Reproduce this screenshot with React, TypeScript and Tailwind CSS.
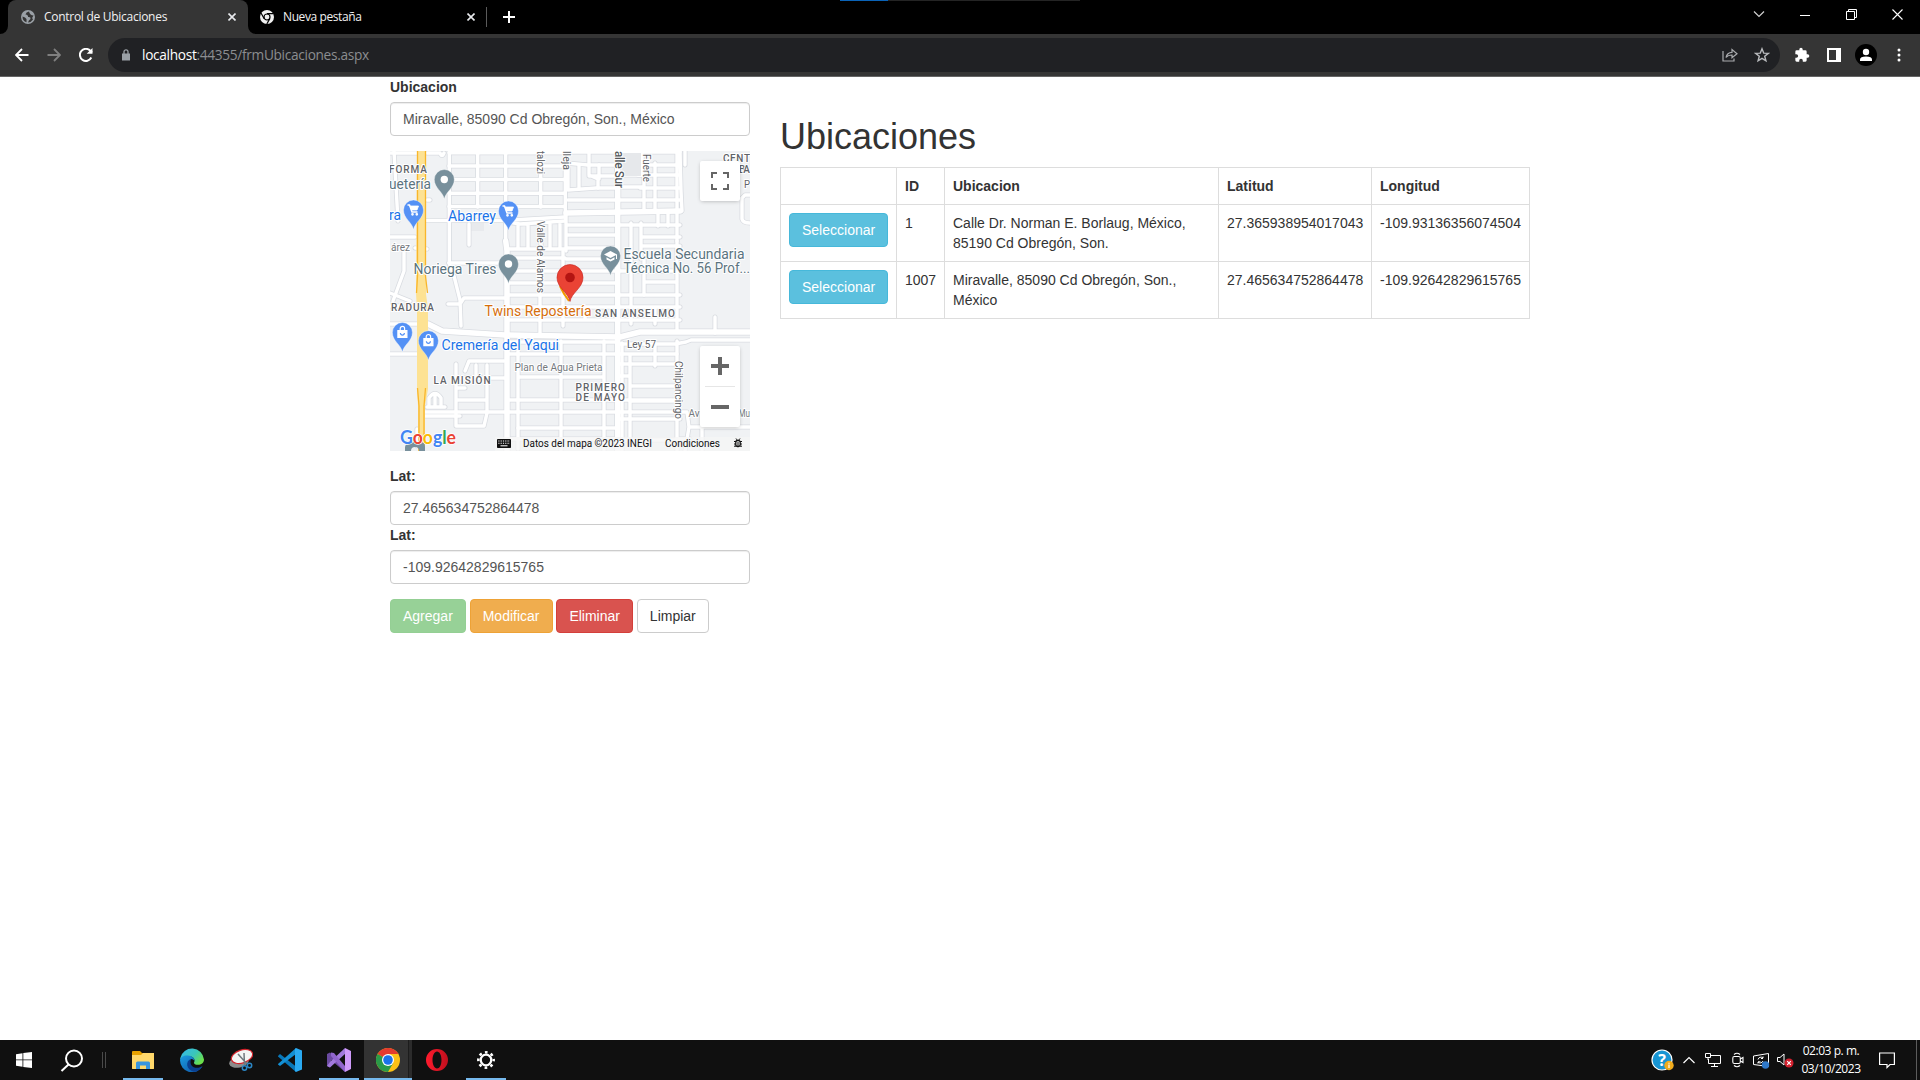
import React from "react";

/* ---------- Map ---------- */

const WIDE_ROADS = [
  "M115.7 90L117 100V300",
  "M227.700 0V300",
  "M38 173L52 180L115 184L230 186L250 181L360 181",
  "M176 62L290 60",
];

const ROADS = [
  "M0 2H27M37 2H50Q52 7 54 2",
  "M115.700 0V95M59.3 0V112M87.7 0V56M150.7 0V56M175.3 0V67",
  "M59 1.7H175M59 15H175M59 28.5H175M59 42.3H175M59 55.5H175",
  "M36 69.5H115L175 66",
  "M176 1H290M176 12L198 14H290M248 24H290M250 37H290M178 39L206 37H226M178 49H290",
  "M199 0V24L208 28V37M189 14V38M178 17V38M209 14V28M199 25L226 25",
  "M230 24H252V2M254 24V60M233 36L254 36M265 12V60M287 0V90M290 0L291 40L292 60",
  "M176 74H290M176 84H228M176 97H228M176 108H228M176 61V100",
  "M241 72V108M251 72V108M268 60V75M278 60V75M252 86H290M252 95H290",
  "M117 71L130 73L175 70M128 75V97M138 74V96M151 73V97M160 73V97M170 73V97M117 98H175M117 107H175",
  "M59 112H117M37 98L25 97M37 49L40 49M79 73V94",
  "M0 86H25M8 70L4 0M14 100V120L3 150M0 142L20 150",
  "M59 112L64 125L70 149L71 175M58 153H70L74 147H115",
  "M117 120H228M117 132H228M117 144H290M117 156H290M117 169H290M173 100V175M150 110V183M195 157V169",
  "M241 108V173M254 108V144M228 120H290M255 131H287M287 90V181M265 157V173",
  "M325 182V166",
  "M228 193H285L296 191L301 189H360M287 190V300",
  "M118 203H228M117 191H228M128 194V298M171 190V300M214 190V300M232 192V300M240 205V290M128 226H214M228 203H287M228 213H287M240 235H287M228 225H240",
  "M117 249H290M117 288H228M240 250H290M128 277H227M228 268H290M232 289H290M265 192V215",
  "M33 261H297L299 276H360M299 276L295 300M287 288H300M312 276V300",
  "M33 265H70M66 213V275H94L97 262V214M66 227H115M66 249H97M66 237H75M75 220L79 210H114M86 214V227",
  "M37 256H55M39 256V247Q45 238 51 247V256M45 243V256M0 173H27M0 203H27",
  "M352 47L355 44H360M352 47V68Q353 72 360 72",
  "M27 278V295M0 155H12M295 0V14",
];

const MINOR_TEXT = "#5f6368";

function Pin({ x, y, color, children }: { x: number; y: number; color: string; children?: React.ReactNode }) {
  return (
    <g transform={`translate(${x} ${y})`}>
      <path d="M0 19.5C-1.5 12-10 8.500-10 0A10 10 0 0 1 10 0C10 8.500 1.500 12 0 19.500Z" fill={color} stroke="#fff" strokeOpacity=".6" strokeWidth=".6" />
      {children}
    </g>
  );
}

const Cart = () => (
  <g fill="none" stroke="#fff" strokeWidth="1.500">
    <path d="M-6-5H-4L-1.500 2H4" />
    <path d="M-3.500-4H5L3.500 0H-2Z" fill="#fff" strokeWidth=".8" />
    <circle cx="-1" cy="4.300" r=".6" />
    <circle cx="3.300" cy="4.300" r=".6" />
  </g>
);

const Bag = () => (
  <g fill="none" stroke="#fff" strokeWidth="1.200">
    <path d="M-4.500-2H4.500V5H-4.500Z" fill="#fff" />
    <path d="M-2.200-2V-4A2.200 2.200 0 0 1 2.200-4V-2" />
    <path d="M-2 .6A2 2 0 0 0 2 .6" stroke="#5491f5" />
  </g>
);

type LabelProps = {
  x: number;
  y: number;
  w: number;
  size: number;
  text: string;
  color?: string;
  bold?: boolean;
  down?: boolean;
};

function MapLabel({ x, y, w, size, text, color = MINOR_TEXT, bold, down }: LabelProps) {
  return (
    <text
      transform={down ? `translate(${x} ${y}) rotate(90)` : `translate(${x} ${y})`}
      textLength={w}
      lengthAdjust={bold ? "spacing" : "spacingAndGlyphs"}
      fontSize={size}
      fill={color}
      fontWeight={bold ? 500 : 400}
      stroke="#fff"
      strokeWidth="2"
      strokeLinejoin="round"
      paintOrder="stroke"
    >
      {text}
    </text>
  );
}

const LABELS: LabelProps[] = [
  { x: -1, y: 22, w: 38, size: 10, text: "FORMA", bold: true },
  { x: -1, y: 37.5, w: 42, size: 14, text: "uetería", color: "#5b7480" },
  { x: -1, y: 69, w: 12, size: 14, text: "ra", color: "#1a73e8" },
  { x: 58, y: 70, w: 48, size: 14, text: "Abarrey", color: "#1a73e8" },
  { x: 1, y: 99.5, w: 19, size: 10, text: "árez", color: "#74797d" },
  { x: 23.5, y: 123, w: 83, size: 14, text: "Noriega Tires", color: "#5b7480" },
  { x: 233.5, y: 108, w: 121, size: 14, text: "Escuela Secundaria", color: "#5b7480" },
  { x: 233.5, y: 122, w: 126.5, size: 14, text: "Técnica No. 56 Prof...", color: "#5b7480" },
  { x: 147, y: 0, w: 23, size: 10, text: "talozi", down: true },
  { x: 173, y: 0, w: 19, size: 10, text: "lleja", down: true },
  { x: 224.5, y: 0, w: 37, size: 12, text: "alle Sur", bold: true, color: "#55595d", down: true },
  { x: 253, y: 3, w: 28, size: 10, text: "Fuerte", down: true },
  { x: 147, y: 70, w: 72, size: 10.5, text: "Valle de Alamos", down: true },
  { x: 333, y: 11, w: 27, size: 10, text: "CENT", bold: true },
  { x: 349, y: 21.5, w: 11, size: 10, text: "BA", bold: true },
  { x: 354, y: 36.5, w: 6, size: 10, text: "P" },
  { x: 1, y: 159.5, w: 43, size: 10, text: "RADURA", bold: true },
  { x: 94.5, y: 164.7, w: 107, size: 14, text: "Twins Repostería", color: "#d56e0c" },
  { x: 205, y: 166, w: 80, size: 10, text: "SAN ANSELMO", bold: true },
  { x: 51.5, y: 199, w: 117.5, size: 14, text: "Cremería del Yaqui", color: "#1a73e8" },
  { x: 237, y: 196.5, w: 29, size: 10, text: "Ley 57" },
  { x: 124.5, y: 219.5, w: 88, size: 10.5, text: "Plan de Agua Prieta", color: "#74797d" },
  { x: 43.5, y: 232.5, w: 57, size: 10, text: "LA MISIÓN", bold: true },
  { x: 185.5, y: 240, w: 49.5, size: 10, text: "PRIMERO", bold: true },
  { x: 185.5, y: 250, w: 49.5, size: 10, text: "DE MAYO", bold: true },
  { x: 285, y: 210, w: 58, size: 10.5, text: "Chilpancingo", down: true },
  { x: 298.5, y: 266, w: 11, size: 10, text: "Av", color: "#74797d" },
  { x: 348.5, y: 266, w: 11.5, size: 10, text: "Mu", color: "#74797d" },
];

function MapDrawing() {
  return (
    <svg width="360" height="300" viewBox="0 0 360 300" fontFamily="Roboto, sans-serif">
      <rect width="360" height="300" fill="#f0f2f4" />
      <path d="M81 72H94V80H81Z" fill="#e8eaed" />
      <g fill="none" strokeLinejoin="round" strokeLinecap="round">
        <g stroke="#d9dce1">
          {ROADS.map((d) => <path key={d} d={d} strokeWidth="5" />)}
          {WIDE_ROADS.map((d) => <path key={d} d={d} strokeWidth="7" />)}
        </g>
        <g stroke="#fff">
          {ROADS.map((d) => <path key={d} d={d} strokeWidth="3.400" />)}
          {WIDE_ROADS.map((d) => <path key={d} d={d} strokeWidth="5.500" />)}
        </g>
      </g>
      <path d="M232 2H251V25H232Z" fill="#e6e8eb" />
      <path d="M27 0H36V143L38 158V238L35 255V300H28V255L27 238V158L26 143Z" fill="#fde293" />
      <path d="M27.500 0V125L26.500 142M35.500 0V125L37.500 142M27.500 237L29 255V300M35.500 237L34 255V300" fill="none" stroke="#f9b62b" strokeWidth="1.300" />
      {LABELS.map((l) => <MapLabel key={l.text + l.x} {...l} />)}
      <Pin x={54.3} y={28.5} color="#78909c"><circle r="3.700" fill="#fff" /></Pin>
      <Pin x={23.5} y={59} color="#5491f5"><Cart /></Pin>
      <Pin x={118.5} y={60} color="#5491f5"><Cart /></Pin>
      <Pin x={118.5} y={113} color="#78909c"><circle r="3.700" fill="#fff" /></Pin>
      <Pin x={220.5} y={105} color="#78909c">
        <path d="M0-5L6.500-1.500L0 2L-6.500-1.500ZM-4 1.200L0 3.500L4 1.200V3.500L0 5.500L-4 3.500ZM5.500-1.500H6.500V3H5.500Z" fill="#fff" />
      </Pin>
      <Pin x={12.4} y={181.500} color="#5491f5"><Bag /></Pin>
      <Pin x={38.4} y={189.700} color="#5491f5"><Bag /></Pin>
      <path d="M170 135Q173 142 179 150" fill="none" stroke="#f29900" strokeWidth="2" />
      <path d="M180 150.500C178.500 141.500 167 137 167 126.500A13 13 0 0 1 193 126.500C193 137 181.500 141.500 180 150.500Z" fill="#ea4335" stroke="#c5221f" strokeWidth=".6" />
      <circle cx="180" cy="126.500" r="4.800" fill="#b31412" />
      <path d="M15 300V296Q16 291 21 291H30Q35 291 35 296V300H29A4 4 0 0 0 21 300Z" fill="#78909c" />
      <rect x="105" y="286" width="255" height="14" fill="#f5f5f5" fillOpacity=".75" />
      <g transform="translate(107 288)">
        <rect width="14" height="9" rx=".8" fill="#111" />
        <path d="M1.300 2H13M1.300 4.300H13" stroke="#fff" strokeWidth="1.100" strokeDasharray="1.200 1.100" />
        <path d="M3.500 6.800H10.500" stroke="#fff" strokeWidth="1" />
      </g>
      <g fill="#111" fontSize="10">
        <text x="133" y="296" textLength="129" lengthAdjust="spacingAndGlyphs">Datos del mapa ©2023 INEGI</text>
        <text x="275" y="296" textLength="55" lengthAdjust="spacingAndGlyphs">Condiciones</text>
      </g>
      <g transform="translate(348 292)" fill="none" stroke="#111" strokeWidth="1">
        <rect x="-2.200" y="-2.500" width="4.400" height="6" rx="1.800" strokeWidth="1.300" />
        <path d="M-4-1.500H-2M2-1.500H4M-4 1H-2M2 1H4M-4 3.200H-2M2 3.200H4M-2-4.500L-.8-3M2-4.500L.8-3M-1 0H1M-1 2H1" />
      </g>
      <text x="10" y="293" fontFamily="Lato, sans-serif" fontSize="19" fontWeight="700" textLength="56" lengthAdjust="spacingAndGlyphs" stroke="#fff" strokeWidth="1.500" paintOrder="stroke">
        <tspan fill="#4285f4">G</tspan><tspan fill="#ea4335">o</tspan><tspan fill="#fbbc04">o</tspan><tspan fill="#4285f4">g</tspan><tspan fill="#34a853">l</tspan><tspan fill="#ea4335">e</tspan>
      </text>
    </svg>
  );
}

function LocationMap() {
  return (
    <div className="relative mt-[15px] h-[300px] w-[360px] overflow-hidden">
      <MapDrawing />
      <button className="absolute top-[10px] left-[310px] flex size-10 items-center justify-center rounded-[2px] bg-white shadow-[0_1px_4px_-1px_rgba(0,0,0,.3)]">
        <svg width="18" height="18" viewBox="0 0 18 18" fill="none" stroke="#666" strokeWidth="2">
          <path d="M1 6V1H6M12 1H17V6M17 12V17H12M6 17H1V12" />
        </svg>
      </button>
      <div className="absolute top-[195px] left-[310px] flex h-[81px] w-10 flex-col items-center rounded-[2px] bg-white shadow-[0_1px_4px_-1px_rgba(0,0,0,.3)]">
        <button className="flex h-10 items-center justify-center">
          <svg width="18" height="18" viewBox="0 0 18 18" stroke="#666" strokeWidth="4"><path d="M0 9H18M9 0V18" /></svg>
        </button>
        <div className="h-px w-[30px] bg-[#e6e6e6]" />
        <button className="flex h-10 items-center justify-center">
          <svg width="18" height="18" viewBox="0 0 18 18" stroke="#666" strokeWidth="4"><path d="M0 9H18" /></svg>
        </button>
      </div>
    </div>
  );
}

/* ---------- Browser chrome ---------- */

const CloseX = () => (
  <svg width="8" height="8" viewBox="0 0 8 8" stroke="#e8eaed" strokeWidth="1.600"><path d="M.5.5L7.500 7.500M7.500.5L.5 7.500" /></svg>
);

function TabStrip() {
  return (
    <div className="flex h-[34px] bg-black text-[12px] text-[#f1f1f1]">
      <div className="relative ml-2 flex w-[240px] shrink-0 items-center rounded-t-lg bg-[#353535] pr-[12px] pl-[13px]">
        <svg className="absolute bottom-0 -left-2" width="8" height="8"><path d="M8 0V8H0A8 8 0 0 0 8 0Z" fill="#353535" /></svg>
        <svg className="absolute -right-2 bottom-0" width="8" height="8"><path d="M0 0V8H8A8 8 0 0 1 0 0Z" fill="#353535" /></svg>
        <svg width="14" height="14" viewBox="0 0 14 14">
          <circle cx="7" cy="7" r="7" fill="#9aa0a6" />
          <path d="M8 1.500Q5 2 4.500 4.500Q7.500 5 7 7Q10 6.500 9.500 9Q7.500 10 7 12.500Q10.500 12 12 9.500Q10.500 7.500 12.500 5.500Q9 5.500 8 1.500ZM1.500 6.500Q4.500 7 5.500 9L5.500 12.300Q1.500 11 1.500 6.500Z" fill="#353535" />
        </svg>
        <span className="ml-[9px] flex-1 whitespace-nowrap tracking-[-0.28px]">Control de Ubicaciones</span>
        <CloseX />
      </div>
      <div className="flex w-[238px] shrink-0 items-center pr-[11px] pl-[12px]">
        <svg width="14" height="14" viewBox="0 0 14 14">
          <circle cx="7" cy="7" r="7" fill="#f1f1f1" />
          <circle cx="7" cy="7" r="3" fill="#f1f1f1" stroke="#000" strokeWidth="1.200" />
          <path d="M7 3.700H13.500M4.200 8.600L1 3M9.800 8.600L6.800 14" stroke="#000" strokeWidth="1.200" />
        </svg>
        <span className="ml-[9px] flex-1 tracking-[-0.4px]">Nueva pestaña</span>
        <CloseX />
      </div>
      <div className="mt-[7px] h-5 w-px bg-[#5a5a5a]" />
      <svg className="mt-[11px] ml-[16px]" width="12" height="12" viewBox="0 0 12 12" stroke="#fff" strokeWidth="2"><path d="M6 0V12M0 6H12" /></svg>
      <div className="ml-[325px] h-px w-12 bg-[#0a63b8]" />
      <div className="h-px w-[192px] bg-[#242424]" />
      <div className="mr-[17px] ml-auto flex items-center gap-[35px] pb-[6px]">
        <svg width="12" height="10" viewBox="0 0 12 10" fill="none" stroke="#d0d0d0" strokeWidth="1.200"><path d="M1 2.500L6 7.500L11 2.500" /></svg>
        <svg width="11" height="11" viewBox="0 0 11 11" stroke="#fff"><path d="M0 6.500H10" /></svg>
        <svg width="11" height="11" viewBox="0 0 11 11" fill="none" stroke="#fff"><path d="M.5 2.500H8.500V10.500H.5ZM2.500 2.500V.5H10.500V8.500H8.500" /></svg>
        <svg width="11" height="11" viewBox="0 0 11 11" stroke="#fff" strokeWidth="1.100"><path d="M.5.5L10.500 10.500M10.500.5L.5 10.500" /></svg>
      </div>
    </div>
  );
}

function Toolbar() {
  return (
    <div className="flex h-[43px] items-start border-b border-[#656565] bg-[#353535] pt-1">
      <div className="flex h-[34px] w-[108px] items-center pl-[15px]">
        <svg width="14" height="14" viewBox="0 0 14 14" fill="none" stroke="#fff" strokeWidth="1.800"><path d="M13.500 7H1.500M7 1L1 7L7 13" /></svg>
        <svg className="ml-[18px]" width="14" height="14" viewBox="0 0 14 14" fill="none" stroke="#7f7f7f" strokeWidth="1.800"><path d="M.5 7H12.500M7 1L13 7L7 13" /></svg>
        <svg className="ml-[18px]" width="14" height="14" viewBox="0 0 14 14" fill="none" stroke="#fff" strokeWidth="2"><path d="M12.300 9.500A6 6 0 1 1 11.500 3L13 4.500" /><path d="M13.500 0V5.800H7.700Z" fill="#fff" stroke="none" /></svg>
      </div>
      <div className="flex h-[34px] w-[1672px] items-center rounded-full bg-[#202124] pr-[10px] pl-[14px]">
        <svg width="8" height="12" viewBox="0 0 8 12"><path d="M0 4.500H8V11.500H0Z" fill="#9aa0a6" /><path d="M2 5V2.800A2 2 0 0 1 6 2.800V5" fill="none" stroke="#9aa0a6" strokeWidth="1.300" /></svg>
        <span className="ml-[12px] flex-1 text-[13.7px] tracking-[-0.32px] text-[#8b8d90]"><span className="text-white">localhost</span>:44355/frmUbicaciones.aspx</span>
        <svg width="16" height="14" viewBox="0 0 16 14" fill="none" stroke="#a9abae" strokeWidth="1.200"><path d="M1 3V13H12V10.500" /><path d="M4 9.500Q5 4.500 10 4.300V1.500L15 5.700L10 9.800V7Q6 7 4 9.500Z" /></svg>
        <svg className="ml-4" width="16" height="16" viewBox="0 0 16 16" fill="none" stroke="#b8babd" strokeWidth="1.400"><path d="M8 1.800L9.700 6.100L14.300 6.400L10.700 9.300L11.900 13.800L8 11.300L4.100 13.800L5.300 9.300L1.700 6.400L6.300 6.100Z" /></svg>
      </div>
      <div className="flex h-[34px] flex-1 items-center pl-[14px]">
        <svg width="16" height="16" viewBox="0 0 24 24" fill="#fff"><path d="M20.500 11H19V7a2 2 0 0 0-2-2h-4V3.500a2.500 2.500 0 0 0-5 0V5H4a2 2 0 0 0-2 2v3.800h1.500a2.700 2.700 0 0 1 0 5.400H2V20a2 2 0 0 0 2 2h3.800v-1.500a2.700 2.700 0 0 1 5.400 0V22H17a2 2 0 0 0 2-2v-4h1.500a2.500 2.500 0 0 0 0-5z" /></svg>
        <svg className="ml-[17px]" width="14" height="14" viewBox="0 0 14 14"><path d="M0 0H14V14H0Z" fill="#fff" /><path d="M2 2H9V12H2Z" fill="#353535" /></svg>
        <svg className="ml-[14px]" width="22" height="22" viewBox="0 0 22 22"><circle cx="11" cy="11" r="11" /><circle cx="11" cy="8" r="3.200" fill="#fff" /><path d="M5 17V15.500Q5 12.500 11 12.500T17 15.500V17Z" fill="#fff" /></svg>
        <svg className="ml-5" width="4" height="14" viewBox="0 0 4 14" fill="#fff"><circle cx="2" cy="2" r="1.500" /><circle cx="2" cy="7" r="1.500" /><circle cx="2" cy="12" r="1.500" /></svg>
      </div>
    </div>
  );
}

/* ---------- Page ---------- */

function Field({ label, value }: { label: string; value: string }) {
  return (
    <div>
      <label className="mb-[5px] block font-bold">{label}</label>
      <input readOnly value={value} className="block h-[34px] w-full rounded-[4px] border border-[#ccc] bg-white px-3 py-[6px] text-[#555] shadow-[inset_0_1px_1px_rgba(0,0,0,.075)]" />
    </div>
  );
}

const BTN = "h-[34px] rounded-[4px] border px-3 leading-5";

const ROWS = [
  { id: "1", place: "Calle Dr. Norman E. Borlaug, México, 85190 Cd Obregón, Son.", lat: "27.365938954017043", lng: "-109.93136356074504" },
  { id: "1007", place: "Miravalle, 85090 Cd Obregón, Son., México", lat: "27.465634752864478", lng: "-109.92642829615765" },
];

const CELL = "border border-[#ddd] p-2 text-left align-top";

function Page() {
  return (
    <main className="flex flex-1 gap-[30px] bg-white pl-[390px] font-['Liberation_Sans',Arial,sans-serif] text-[14px] leading-5 text-[#333]">
      <section className="w-[360px]">
        <Field label="Ubicacion" value="Miravalle, 85090 Cd Obregón, Son., México" />
        <LocationMap />
        <div className="mt-[15px]">
          <Field label="Lat:" value="27.465634752864478" />
          <Field label="Lat:" value="-109.92642829615765" />
        </div>
        <div className="mt-[15px] flex gap-[3.9px]">
          <button className={`${BTN} border-[#94cf94] bg-[#97d197] text-white`}>Agregar</button>
          <button className={`${BTN} border-[#eea236] bg-[#f0ad4e] text-white`}>Modificar</button>
          <button className={`${BTN} border-[#d43f3a] bg-[#d9534f] text-white`}>Eliminar</button>
          <button className={`${BTN} border-[#ccc] bg-white`}>Limpiar</button>
        </div>
      </section>
      <section className="w-[750px] pt-10">
        <h1 className="mb-[10px] text-[36px] leading-[40px] font-normal">Ubicaciones</h1>
        <table className="w-[749px] table-fixed border-collapse">
          <colgroup>
            <col className="w-[116px]" /><col className="w-[48px]" /><col className="w-[274px]" /><col className="w-[153px]" /><col className="w-[158px]" />
          </colgroup>
          <thead>
            <tr>{["", "ID", "Ubicacion", "Latitud", "Longitud"].map((h) => <th key={h} className={CELL}>{h}</th>)}</tr>
          </thead>
          <tbody>
            {ROWS.map((r) => (
              <tr key={r.id}>
                <td className={CELL}><button className={`${BTN} border-[#46b8da] bg-[#5bc0de] text-white`}>Seleccionar</button></td>
                <td className={CELL}>{r.id}</td>
                <td className={CELL}>{r.place}</td>
                <td className={CELL}>{r.lat}</td>
                <td className={CELL}>{r.lng}</td>
              </tr>
            ))}
          </tbody>
        </table>
      </section>
    </main>
  );
}

/* ---------- Taskbar ---------- */

function TaskItem({ state, children }: { state?: "open" | "active"; children: React.ReactNode }) {
  return (
    <div className={state === "active" ? "relative flex h-10 w-[49px] border-r border-[#101010] bg-[#333]" : "relative flex h-10 w-[49px] pr-px"}>
      {state === "active" && <div className="absolute top-0 right-0 h-10 w-1 border-l border-[#1c1c1c] bg-[#2b2b2b]" />}
      <div className="relative flex flex-1 items-center justify-center">{children}</div>
      {state && <div className={state === "active" ? "absolute bottom-0 left-0 h-[2px] w-12 bg-[#76b9ed]" : "absolute bottom-0 left-1 h-[2px] w-10 bg-[#76b9ed]"} />}
    </div>
  );
}

function Taskbar() {
  return (
    <div className="flex h-10 items-center bg-[#101010] text-white">
      <svg className="ml-4" width="16" height="16" viewBox="0 0 16 16" fill="#fff"><path d="M0 2.200L6.500 1.200V7.500H0ZM7.300 1.100L16 0V7.500H7.300ZM0 8.300H6.500V14.700L0 13.800ZM7.300 8.300H16V16L7.300 14.900Z" /></svg>
      <svg className="ml-[28px]" width="23" height="23" viewBox="0 0 23 23" fill="none" stroke="#fff" strokeWidth="2"><circle cx="14" cy="9.500" r="8" /><path d="M8.500 15.500L1.500 22" /></svg>
      <div className="mr-[13px] ml-[19px] flex h-4 w-1 justify-between"><div className="w-px bg-[#4a4a4a]" /><div className="w-px bg-[#4a4a4a]" /></div>
      <TaskItem state="open">
        <svg width="22" height="19" viewBox="0 0 22 19"><path d="M0 1Q0 0 1 0H8L10 2H21Q22 2 22 3V18H0Z" fill="#e8a200" /><path d="M0 4H9L11 2H22V17Q22 18 21 18H1Q0 18 0 17Z" fill="#ffd86b" /><path d="M4 18V12Q4 10.500 5.500 10.500H16.500Q18 10.500 18 12V18H14V14.500H8V18Z" fill="#3a96dd" /></svg>
      </TaskItem>
      <TaskItem>
        <svg width="24" height="24" viewBox="0 0 24 24">
          <defs>
            <linearGradient id="edgeTop" x1="0" y1="0" x2="1" y2=".6"><stop offset="0" stopColor="#35b8f0" /><stop offset=".6" stopColor="#3bc6b8" /><stop offset="1" stopColor="#6be04b" /></linearGradient>
            <linearGradient id="edgeLow" x1="0" y1="0" x2="1" y2="1"><stop offset="0" stopColor="#1b9de2" /><stop offset="1" stopColor="#0d4fa0" /></linearGradient>
          </defs>
          <path d="M.3 10A12 12 0 0 1 24 11.500C24 15 21 16.800 18 16.800S13.800 15.500 14 14.500C15.500 12 14 8.500 9.500 8.200C5 8 1 9.500.3 12Z" fill="url(#edgeTop)" />
          <path d="M0 12.500C.5 9 4 7.200 8 7.600C12 8 14.800 10.500 14.500 13C14 12 12.500 10.800 11.500 11C8 12 7.500 21 17 20.500C19.500 20.200 21.500 18.800 22.500 18.200A12 12 0 0 1 0 12.500Z" fill="url(#edgeLow)" />
          <path d="M11 11C5 13 6 22 14 23.800A12 12 0 0 0 22.500 18.200C16 22 8.500 19 11 11Z" fill="#0b3f8f" />
        </svg>
      </TaskItem>
      <TaskItem>
        <svg width="24" height="24" viewBox="0 0 24 24">
          <ellipse cx="10" cy="14" rx="10" ry="5.500" fill="#8b8b8b" transform="rotate(-12 10 14)" />
          <ellipse cx="13" cy="8.500" rx="11" ry="6.500" fill="#f4f4f4" stroke="#d3222a" strokeWidth="1.200" transform="rotate(-18 13 8.500)" />
          <path d="M9 6L18 16M15 5L15.500 17" stroke="#70787e" strokeWidth="1.500" /><circle cx="15.500" cy="20" r="2.200" fill="none" stroke="#2b86c5" strokeWidth="1.500" /><circle cx="20.500" cy="17.500" r="2.200" fill="none" stroke="#2b86c5" strokeWidth="1.500" />
        </svg>
      </TaskItem>
      <TaskItem>
        <svg width="24" height="24" viewBox="0 0 24 24"><path d="M0 8L2 6L18 18.500V24L0 8.500Z" fill="#0877b9" /><path d="M0 16L18 0V6L2 18L0 16.500Z" fill="#1390d5" /><path d="M18 0L24 2.500V21.500L18 24L17 23V1Z" fill="#2aaaf2" /></svg>
      </TaskItem>
      <TaskItem state="open">
        <svg width="24" height="24" viewBox="0 0 24 24"><path d="M0 6L3 4.500L18 19V24L4 12V16L3 19.500L0 18Z" fill="#6b4aa0" /><path d="M0 18L3 19.500L18 6V0L3 14Z" fill="#a179dc" /><path d="M4 8L18 24V18L7 5L4 4.500Z" fill="#9065cc" /><path d="M18 0L24 3V21L18 24Z" fill="#cf9bfa" /></svg>
      </TaskItem>
      <TaskItem state="active">
        <svg width="24" height="24" viewBox="0 0 24 24"><circle cx="12" cy="12" r="12" fill="#fbc116" /><path d="M12 12L1.600 6A12 12 0 0 1 22.400 6H12Z" fill="#e33b2e" /><path d="M1.600 6A12 12 0 0 0 12 24L17.200 15L12 12Z" fill="#2a9a48" /><circle cx="12" cy="12" r="6" fill="#fff" /><circle cx="12" cy="12" r="4.800" fill="#1a73e8" /></svg>
      </TaskItem>
      <TaskItem>
        <svg width="22" height="22" viewBox="0 0 22 22"><defs><linearGradient id="opera" x1="0" x2="1"><stop offset="0" stopColor="#ff1b2d" /><stop offset="1" stopColor="#c00f1d" /></linearGradient></defs><path fillRule="evenodd" d="M11 0A11 11 0 1 1 11 22A11 11 0 0 1 11 0ZM11 2.500C8.500 2.500 6.500 6.200 6.500 11S8.500 19.500 11 19.500S15.500 16 15.500 11S13.500 2.500 11 2.500Z" fill="url(#opera)" /></svg>
      </TaskItem>
      <TaskItem state="open">
        <svg width="18" height="18" viewBox="0 0 18 18" fill="none" stroke="#fff"><circle cx="9" cy="9" r="5.300" strokeWidth="2.300" /><circle cx="9" cy="9" r="7.700" strokeWidth="2.500" strokeDasharray="2.700 3.347" strokeDashoffset="1.350" /></svg>
      </TaskItem>

      <div className="mr-[3px] ml-auto flex h-10 items-center">
        <svg width="23" height="22" viewBox="0 0 23 22"><circle cx="11" cy="11" r="10" fill="#1795d4" stroke="#fff" strokeWidth="1.200" /><text x="11" y="17" textAnchor="middle" fontFamily="Open Sans, sans-serif" fontWeight="700" fontSize="16" fill="#fff">?</text><circle cx="18" cy="16.500" r="4.700" fill="#f0ab1c" /><path d="M18 15.500V19M18 13.700V14.700" stroke="#fff" strokeWidth="1.200" /></svg>
        <svg className="ml-[9px]" width="12" height="8" viewBox="0 0 12 8" fill="none" stroke="#fff" strokeWidth="1.200"><path d="M.5 7L6 1.500L11.500 7" /></svg>
        <svg className="ml-[10px]" width="16" height="14" viewBox="0 0 16 14" fill="none" stroke="#fff"><path d="M5.500 2.500H15.500V10.500H3.500V6M.5.5H5.500V4.500H.5ZM3 4.500V7M9.500 10.500V13M6 13.500H13" /></svg>
        <svg className="ml-[11px]" width="12" height="16" viewBox="0 0 12 16" fill="none" stroke="#fff" strokeWidth="1.100"><rect x=".8" y="4.500" width="7.500" height="7" rx="1.500" /><path d="M8.300 7L11 5.500V10.500L8.300 9M2 2.500Q5 0 8 2.500M2 13.500Q5 16 8 13.500" /></svg>
        <svg className="ml-[9px]" width="17" height="17" viewBox="0 0 17 17" fill="none" stroke="#fff"><path d="M.5 4L15.500 1.500V14.500L.5 12.500Z" /><path d="M5 7.500A3 3 0 0 1 10 6V4.500M10 6.500H8M10 9A3 3 0 0 1 5 10V11.500M5 9.800H7.500" /><circle cx="12.500" cy="13" r="3.700" fill="#2f78c8" stroke="none" /></svg>
        <svg className="ml-[7px]" width="17" height="16" viewBox="0 0 17 16" fill="none" stroke="#fff"><path d="M.5 5.500H3L7 2V13L3 9.500H.5Z" /><circle cx="12" cy="11" r="4.500" fill="#d3202e" stroke="none" /><path d="M10.200 9.200L13.800 12.800M13.800 9.200L10.200 12.800" strokeWidth="1.200" /></svg>
        <div className="ml-[6px] w-[62px] text-center text-[12px] leading-[18px] tracking-[-0.45px] whitespace-nowrap"><div>02:03 p. m.</div><div>03/10/2023</div></div>
        <svg className="ml-[17px]" width="16" height="17" viewBox="0 0 16 17" fill="none" stroke="#fff" strokeWidth="1.200"><path d="M.6 1H15.400V12.500H11L8 15.500V12.500H.6Z" /></svg>
        <div className="ml-[21px] h-10 w-px bg-[#5c5c5c]" />
      </div>
    </div>
  );
}

export default function App() {
  return (
    <div className="flex h-[1080px] w-[1920px] flex-col overflow-hidden bg-white font-['Open_Sans','Noto_Sans',sans-serif]">
      <TabStrip />
      <Toolbar />
      <Page />
      <Taskbar />
    </div>
  );
}
